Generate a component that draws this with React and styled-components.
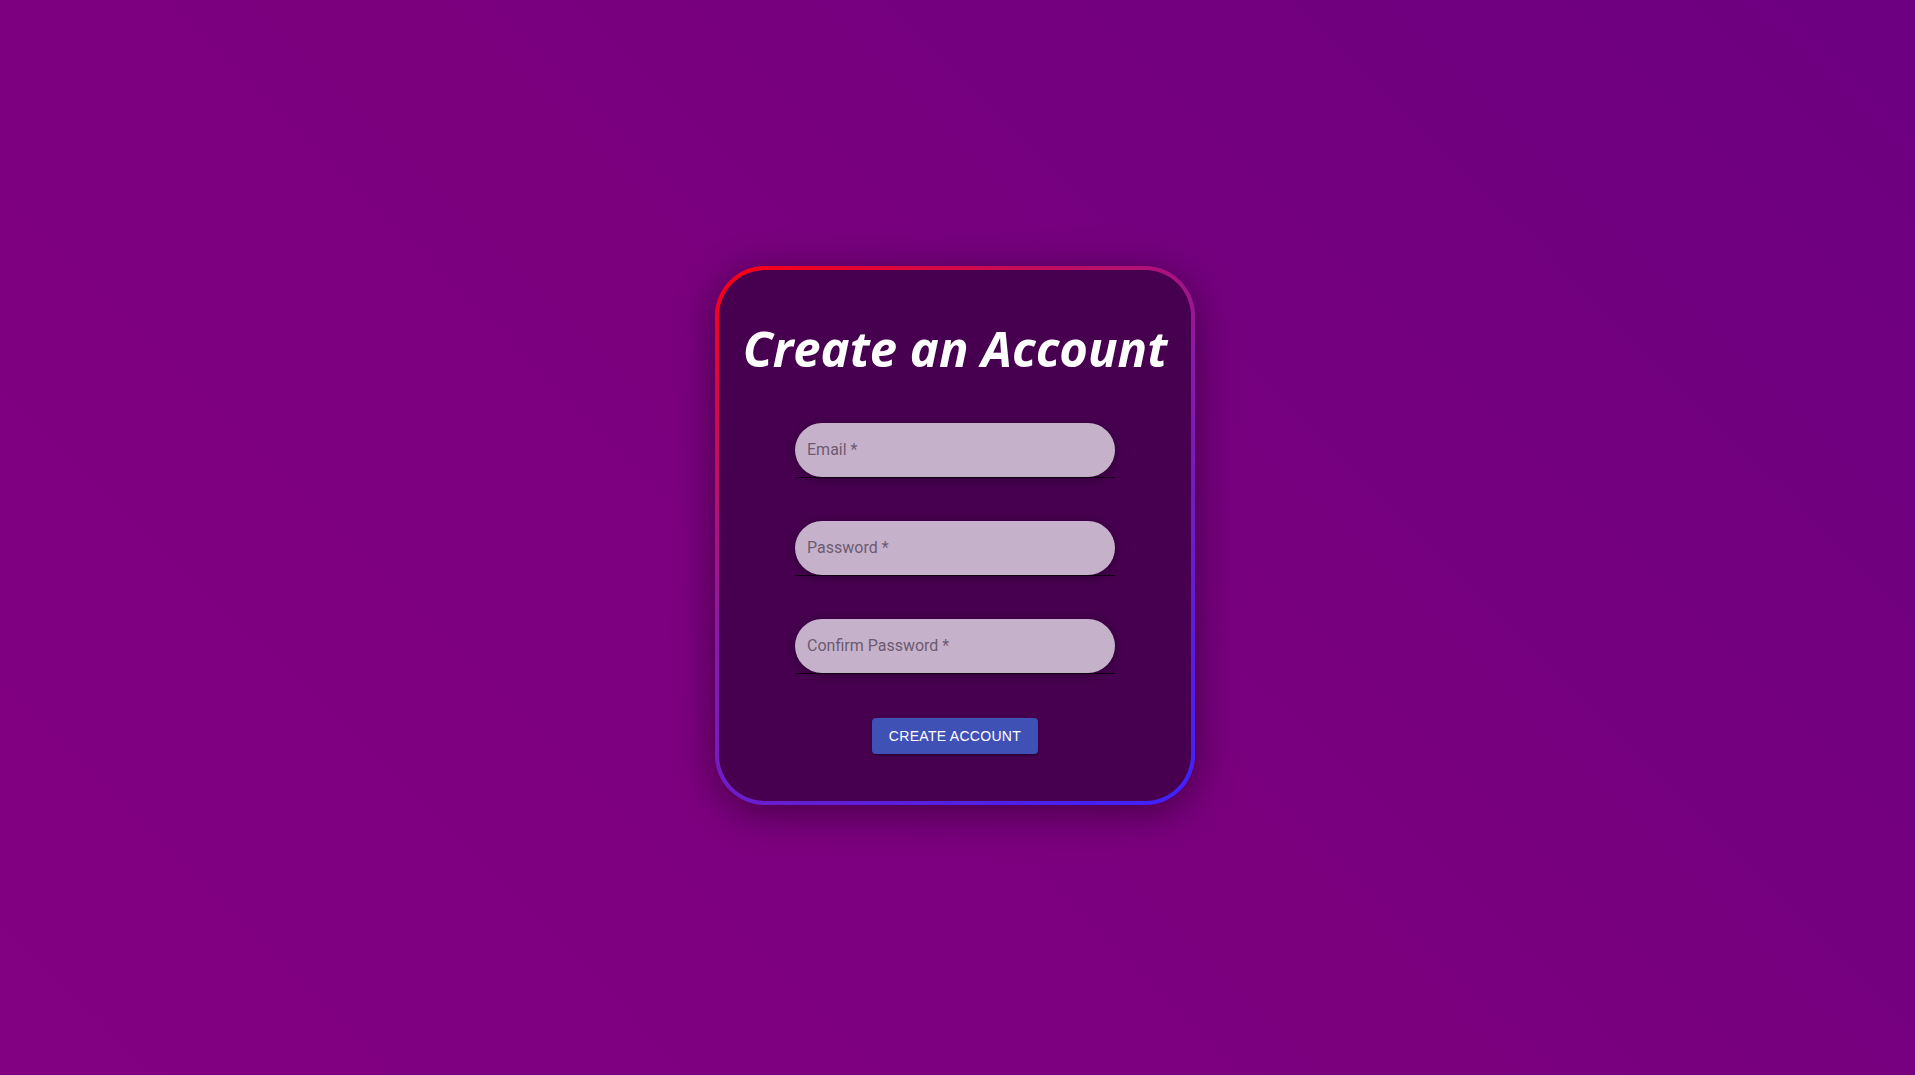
import React from 'react';
import styled, { createGlobalStyle } from 'styled-components';

const GlobalStyle = createGlobalStyle`
  html, body {
    margin: 0;
    padding: 0;
    height: 100%;
  }
  body {
    font-family: Roboto, "Liberation Sans", Arial, sans-serif;
  }
  * {
    box-sizing: border-box;
  }
`;

const Page = styled.div`
  min-height: 100vh;
  display: flex;
  align-items: center;
  justify-content: center;
  padding: 0 5px 5px 0;
  background: linear-gradient(45deg, #820082 0%, #7a007e 50%, #6c0080 100%);
`;

// gradient border done with two backgrounds (padding-box + border-box)
const Card = styled.div`
  width: 480px;
  padding: 49px 0 47px;
  display: flex;
  flex-direction: column;
  align-items: center;
  gap: 43px;
  border: 4px solid transparent;
  border-radius: 50px;
  background:
    linear-gradient(#46004f, #46004f) padding-box,
    linear-gradient(150deg, #ff0010 0%, #8a1aa6 45%, #3c22ff 100%) border-box;
  box-shadow: 0 8px 40px rgba(0, 0, 0, 0.45);
`;

const Title = styled.h1`
  margin: 0 0 3px;
  font-family: "Open Sans", Lato, sans-serif;
  font-style: italic;
  font-weight: 700;
  font-size: 49px;
  line-height: 58px;
  color: #ffffff;
  white-space: nowrap;
`;

const Field = styled.div`
  width: 320px;
  border-bottom: 1px solid rgba(0, 0, 0, 0.75);
`;

const Input = styled.input`
  display: block;
  width: 100%;
  height: 54px;
  padding: 0 12px;
  border: none;
  outline: none;
  border-radius: 27px;
  background: #c6b1cb;
  box-shadow: 0 2px 10px rgba(0, 0, 0, 0.35);
  font-family: Roboto, "Liberation Sans", Arial, sans-serif;
  font-size: 16px;
  color: #333;

  &::placeholder {
    color: #6c5b70;
    opacity: 1;
  }
`;

const Button = styled.button`
  margin-top: 1px;
  width: 166px;
  height: 36px;
  border: none;
  border-radius: 4px;
  background: #3f51b5;
  color: #ffffff;
  font-family: "Liberation Sans", Arial, sans-serif;
  font-size: 14px;
  font-weight: 400;
  letter-spacing: 0.3px;
  text-transform: uppercase;
  cursor: pointer;
  box-shadow: 0 3px 1px -2px rgba(0, 0, 0, 0.2), 0 2px 2px 0 rgba(0, 0, 0, 0.14),
    0 1px 5px 0 rgba(0, 0, 0, 0.12);
`;

const fields = [
  { name: 'email', type: 'email', label: 'Email *' },
  { name: 'password', type: 'password', label: 'Password *' },
  { name: 'confirm', type: 'password', label: 'Confirm Password *' },
];

const App = () => {
  return (
    <>
      <GlobalStyle />
      <Page>
        <Card as="form" onSubmit={e => e.preventDefault()}>
          <Title>Create an Account</Title>
          {fields.map(f => (
            <Field key={f.name}>
              <Input name={f.name} type={f.type} placeholder={f.label} />
            </Field>
          ))}
          <Button type="submit">Create Account</Button>
        </Card>
      </Page>
    </>
  );
};

export default App;
